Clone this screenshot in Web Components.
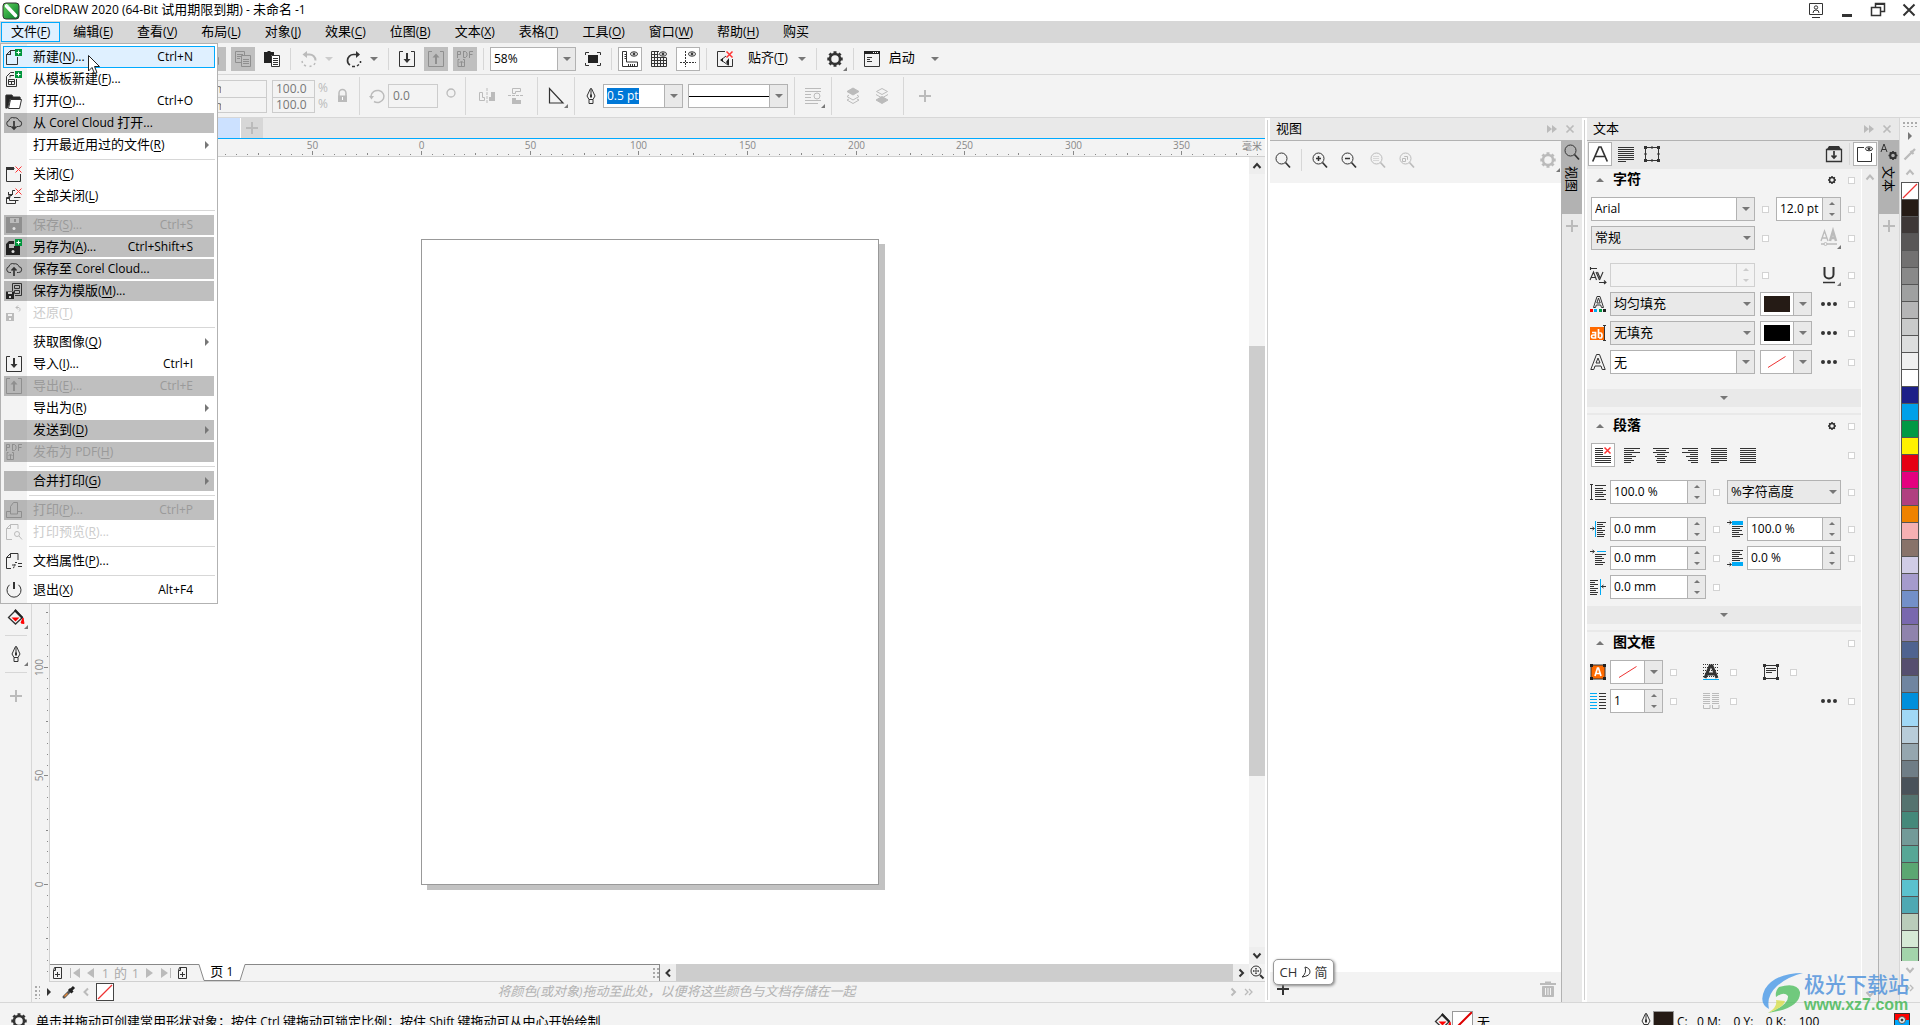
<!DOCTYPE html>
<html lang="zh-CN">
<head>
<meta charset="utf-8">
<title>CorelDRAW 2020</title>
<style>
html,body{margin:0;height:100%;overflow:hidden}
body{font:12px/16px "Open Sans","Noto Sans CJK SC",sans-serif;color:#000;background:#f3f3f3}
</style>
</head>
<body>
<corel-app></corel-app>
<script>
const ICONS = {
  logo:'<defs><linearGradient id="g" x1="0" y1="0" x2="1" y2="1"><stop offset="0" stop-color="#5fd35a"/><stop offset="1" stop-color="#057a2c"/></linearGradient></defs><rect width="16" height="16" rx="3" fill="url(#g)"/><path d="M3.5 3 12.500 12.500" stroke="#fff" stroke-width="3.600" stroke-linecap="round"/><path d="M3 2.500l3 1" stroke="#cfe" stroke-width="1"/>',
  doc:'<path d="M9.500 1.500H4.500L.5 5.500V15.500H11.500V8M.5 5.500H4.500V1.500"/><path d="M.5 5.500H4.500V1.500z" fill="#333" fill-opacity=".15"/>',
  plus:'<path d="M9 0h7v7H9z" fill="#00963c" stroke="none"/><path d="M12.500 1.500v4M10.500 3.500h4" stroke="#fff"/>',
  x:'<path d="M9.500.5l6 6M15.500.5l-6 6" stroke="#f33"/>',
  tmpl:'<path d="M8 1.500H4.500L.5 5.500V15.500H10.500V8M2.500 13.500v-5h6v5zM2.500 10.500h6M5.500 10.500v3M4 6.500V4.500h4"/>',
  open:'<path d="M0 15.500V2.500h5l1.500 2H14V6" fill="none"/><path d="M0 2h6l1 2h7v2H4L1.500 15H0z" fill="#222"/><path d="M4.500 6.500h11l-2 9h-11z" fill="#fff"/>',
  cdown:'<path d="M5 11.500H3.500A3 3 0 0 1 3 5.600 3.500 3.500 0 0 1 8 2.900a4 4 0 0 1 5 2.800 2.900 2.900 0 0 1-.5 5.800H11" /><path d="M8 6v8M5.500 11.500 8 14l2.500-2.500" stroke-width="1.700"/>',
  cup:'<path d="M5 11.500H3.500A3 3 0 0 1 3 5.600 3.500 3.500 0 0 1 8 2.900a4 4 0 0 1 5 2.800 2.900 2.900 0 0 1-.5 5.800H11" /><path d="M8 15V7M5.500 9.500 8 7l2.500 2.500" stroke-width="1.700"/>',
  close:'<path d="M8.500 2.500H.5V15.500H14.500V8"/><path d="M0 1h8v3H0z" fill="#333" stroke="none"/>',
  closeall:'<path d="M4 9.500v-2h2M2.500 7v-3h0M6.500 5.500v-3H9M.5 15.500v-6h3M.5 15.500h9V12M.5 10.500h2.500v-4h4M6.500 3v3.500M12.500 12.500H3.500v-4M14.500 9.500H8"/>',
  save:'<path d="M0 0h16v16H0z" fill="currentColor" stroke="none"/><path d="M4 1h9v5H4z" fill="#bbb" stroke="none"/><path d="M8 2h2v3H8z" fill="currentColor" stroke="none"/><circle cx="8" cy="11.500" r="1.500" fill="#ddd" stroke="none"/>',
  saveas:'<path d="M0 5l3-3h5v5h6v9H0z" fill="#222" stroke="none"/><path d="M3 5h5v4H3z" fill="#bbb" stroke="none"/><circle cx="7" cy="12.500" r="1.500" fill="#ddd" stroke="none"/>',
  savetmpl:'<path d="M6.500.5h9v12H9M8.500 2.500h5v3h-5zM8.500 7.500h5v3h-5zM6.500.5V8"/><path d="M0 8.500h8V16H0z" fill="#222" stroke="none"/><path d="M2 9h4v2H2zM3 13h2v2H3z" fill="#ccc" stroke="none"/>',
  revert:'<path d="M0 8h8v8H0z" fill="currentColor" stroke="none"/><path d="M2 9h4v2H2zM3 13h2v2H3z" fill="#f3f3f3" stroke="none"/><path d="M10 2.500h3a2.500 2.500 0 0 1 0 4M12 .5l-2 2 2 2" />',
  import:'<path d="M4 .5H.5v15h15V.5H12"/><path d="M8 2v8" stroke-width="2"/><path d="M4.500 8 8 12l3.500-4z" fill="currentColor" stroke="none"/>',
  export:'<path d="M4 .5H.5v15h15V.5H12"/><path d="M8 13V5" stroke-width="2"/><path d="M4.500 6.500 8 2.500l3.500 4z" fill="currentColor" stroke="none"/>',
  pdf:'<path d="M.5 7V.5h3v3H.5M6.500 0v6.500H8.500l1.500-1.500V2L8.500.5H6.500M12.500 7V.5h3.500M12.500 3.500h3M2.500 8.500H1v7h6.500v-7H6M4.500 15V11M2.500 12l2-2 2 2"/>',
  print:'<path d="M4 9.500H.5v6h15v-6H12M4.500 12V4.500l3-4h4V12z"/>',
  preview:'<path d="M6 15.500H.5v-11l4-4H12V5M.5 4.500h4v-4"/><circle cx="11" cy="10" r="2.500"/><path d="M13 12l3 3.500"/>',
  props:'<path d="M5 15.500H.5v-11l4-4H12V7M.5 4.500h4v-4M12 10.500h4M12 13.500h4M8 13.500l1-1V11M6 12h3M7 15l1.500-1M9 9.500h2"/>',
  power:'<path d="M8 0v7" stroke-width="2"/><path d="M3.500 2.800a7 7 0 1 0 9 0"/>',
  copy:'<path d="M.5.500h9v11h-9zM2 3.500h6M2 5.500h4M2 7.500h3"/><path d="M6.500 4.500h9v11h-9z" fill="#bfbfbf"/><path d="M8 8.500h6M8 10.500h6M8 12.500h6"/>',
  cut:'<path d="M2.500 6.500h10v7h-10z"/>',
  paste:'<path d="M0 1h3l1-1h2l1 1h3v3H7v8H0z" fill="#222" stroke="none"/><path d="M7.500 4.500h8v11h-8z" fill="#fff"/><path d="M9 7.500h5M9 9.500h5M9 11.500h5M9 13.500h5"/>',
  undo:'<path d="M4 3.500h4a6 6 0 0 1 6.500 6" stroke-width="2"/><path d="M14 12l-1 2M10.500 15l-2 .5M5 15l-2-1M1.500 12 1 10" stroke-width="1.500"/><path d="M6 0v7L1.500 3.500z" fill="currentColor" stroke="none"/>',
  redo:'<path d="M12 3.500H8a6 6 0 0 0-6.500 6q0 3 2.500 4.500" stroke-width="1.700"/><path d="M6 15.500h3M11 15l2-1.500M14.500 12v-2" stroke-width="1.500"/><path d="M10 0v7l4-3.500z" fill="currentColor" stroke="none"/>',
  full:'<path d="M3 4h10v8H3z" fill="#222" stroke="none"/><path d="M.5 4V1.500H4M12 1.500h3.500V4M15.500 12v2.500H12M4 14.500H.5V12"/>',
  rulers:'<path d="M.5.500h4v10.500h11v4.500H.5zM2.500 3.500h2M2.500 5.500h2M2.500 7.500h2M6.500 13v2M8.500 13v2M10.500 13v2M12.500 13v2"/><ellipse cx="12" cy="3" rx="3.500" ry="2.200"/><circle cx="12" cy="3" r="1" fill="#222"/>',
  grid:'<path d="M.5.500h7.500M.5.500v15h15V7M.5 3.500h7M.5 6.500h15M.5 9.500h15M.5 12.500h15M3.500 0v16M6.500 0v16M9.500 6v10M12.500 6v10"/><ellipse cx="12" cy="3" rx="3.500" ry="2.200"/><circle cx="12" cy="3" r="1" fill="#222"/>',
  guides:'<path d="M5.500 0v16M0 11.500h16" stroke-dasharray="2 1"/><ellipse cx="12" cy="3" rx="3.500" ry="2.200"/><circle cx="12" cy="3" r="1" fill="#222"/>',
  snapoff:'<path d="M8 .5H.5v15h15V8"/><path d="M9 5 4 9l7 5V9" fill="none"/><path d="M3 9l3-2v4zM9 11l3-4v8z" fill="#222" stroke="none"/><path d="M9.500.5l6 6M15.500.5l-6 6" stroke="#f33" stroke-width="1.500"/>',
  gear:'<circle cx="8" cy="8" r="5" stroke-width="2.500"/><path d="M8 .3v2.500M8 13.200v2.500M.3 8h2.500M13.200 8h2.500M2.500 2.500l1.800 1.800M11.700 11.700l1.800 1.800M13.500 2.500l-1.800 1.800M4.300 11.700l-1.800 1.800" stroke-width="3"/>',
  gearsm:'<circle cx="8" cy="8" r="2.500" stroke-width="1.500"/><path d="M8 4v1.500M8 10.500V12M4 8h1.500M10.500 8H12M5.200 5.200l1 1M9.800 9.800l1 1M10.800 5.200l-1 1M6.200 9.800l-1 1" stroke-width="1.500"/>',
  launch:'<path d="M.5.500h15v15H.5zM3 6.500h5M3 8.500h3M3 10.500h5"/><path d="M0 0h16v3H0z" fill="#222" stroke="none"/><path d="M9 1.500h6" stroke="#fff" stroke-dasharray="1 1"/>',
  lock:'<path d="M4 8V5a3 3 0 0 1 7 0v3" stroke-width="1.500"/><path d="M3 7.500h9V14H3z" fill="currentColor" stroke="none"/><path d="M7.500 9v3" stroke="#fff"/>',
  rot:'<path d="M2 8a6.500 6 0 1 1 3 5.500" stroke-width="1.500"/><path d="M0 8h5l-2.500 3.500z" fill="currentColor" stroke="none"/>',
  deg:'<circle cx="8" cy="5" r="4" stroke-width="1.300"/>',
  mh:'<path d="M.5 4.500h3v5h2v3h-5z"/><path d="M16 4h-4v5h-2v4h6z" fill="currentColor" stroke="none"/><path d="M8 0v16" stroke-dasharray="3 1"/>',
  mv:'<path d="M4.500.500h8v3h-5v2h-3z"/><path d="M4 16h9v-4H8v-2H4z" fill="currentColor" stroke="none"/><path d="M0 7.500h16" stroke-dasharray="3 1"/>',
  corner:'<path d="M1.500.500v14.500H15z" stroke-width="1.200"/>',
  pen:'<path d="M7.500.500 4 8l2 3.500h4L12 8 8.500.500zM6 11.500v4h4v-4M8 1v6"/><path d="M8 6.500v3" stroke-width="2"/>',
  wrap:'<path d="M0 .5h16M0 3.500h16M0 6.500h6M0 9.500h6M0 12.500h16M0 15.500h13"/><circle cx="12" cy="8" r="3" fill="#f3f3f3"/>',
  front:'<path d="M8 0l6 3.500-6 3.500-6-3.500z" fill="currentColor"/><path d="M4 7l-2 1.500 6 3.500 6-3.500L12 7M4 11l-2 1 6 3.500 6-3.500-2-1"/>',
  back:'<path d="M8 8.500l6 3.500-6 3.500-6-3.500z" fill="currentColor"/><path d="M8 .5l5.500 3-5.500 3-5.500-3zM2 6.500l6 3.500 6-3.500"/>',
  add:'<path d="M8 2v12M2 8h12" stroke-width="2"/>',
  bucket:'<path d="M7.500 1.500l-7 7 7 6.500 7-6.500z" stroke-width="1.300"/><path d="M7.500 0 15 8l-1.500 1.500L6 2z" fill="#222" stroke="none"/><path d="M3.500 8.500h8l-4 4z" fill="red" stroke="none"/><path d="M13 14l2-5 1 5.500z" fill="red" stroke="red"/>',
  mag:'<circle cx="6.500" cy="6.500" r="5.500"/><path d="M10.500 10.500l4.500 5" stroke-width="1.700"/>',
  magp:'<circle cx="6.500" cy="6.500" r="5.500"/><path d="M10.500 10.500l4.500 5" stroke-width="1.700"/><path d="M6.500 4v5M4 6.500h5" stroke-width="1.500"/>',
  magm:'<circle cx="6.500" cy="6.500" r="5.500"/><path d="M10.500 10.500l4.500 5" stroke-width="1.700"/><path d="M4 6.500h5" stroke-width="1.500"/>',
  magd:'<circle cx="6.500" cy="6.500" r="5.500"/><path d="M10.500 10.500l4.500 5" stroke-width="1.700"/><path d="M3.500 4.500h6M3.500 6.500h6M3.500 8.500h6" stroke-dasharray="1 1"/>',
  magr:'<circle cx="6.500" cy="6.500" r="5.500"/><path d="M10.500 10.500l4.500 5" stroke-width="1.700"/><path d="M3.500 6.500h3v3h-3zM5.500 5V4.500h3v3H8"/>',
  trash:'<path d="M5 1.500h6M0 3h16" stroke-width="2"/><path d="M2.500 5.500h11v10h-11z" fill="currentColor"/><path d="M5.500 7v7M8 7v7M10.500 7v7" stroke="#f3f3f3"/>',
  bigA:'<path d="M.7 15.500 7 1h2l6.300 14.500M3 10.500h10" stroke-width="1.700"/>',
  lines:'<path d="M0 1.500h16M0 3.500h16M0 5.500h16M0 7.500h16M0 9.500h16M0 11.500h16M0 13.500h16M0 15.500h8"/>',
  frame:'<path d="M1.500 1.500h13v13h-13z"/><path d="M0 0h3v3H0zM13 0h3v3h-3zM0 13h3v3H0zM13 13h3v3h-3z" fill="#333" stroke="none"/><path d="M7 1.500h2M7 14.500h2M1.500 7v2M14.500 7v2" stroke-width="2"/>',
  dock:'<path d="M.5 3.500h15v12H.5z" stroke-width="1.300"/><path d="M1 3 3 0h10l2 3z" fill="#333" stroke="none"/><path d="M8 5v7M5.500 9.500 8 12l2.500-2.500" stroke-width="1.700"/>',
  eyepage:'<path d="M7 1.500H.5v14h14V7"/><ellipse cx="12" cy="2.800" rx="3.500" ry="2"/><circle cx="12" cy="2.800" r="1" fill="#222"/>',
  AA:'<path d="M0 11 3.500 1 7 11M1.500 8h4" stroke-width="1.300"/><path d="M9 11l3-10 3 10M10 8h4" stroke-width="2.500"/><path d="M0 14h16" stroke-width="1.500"/><circle cx="4.500" cy="14" r="1.500" fill="#f3f3f3"/>',
  AV:'<path d="M0 13 3.500 5l3 8M1.500 10.500h4M6 5l3.500 8M9.500 13 13 5M7.500 5l3 7M.5 0v3M.5 1.500H7M9 15.500h7M14 13.500l2 2-2 1.500" stroke-width="1.100"/>',
  U:'<path d="M3.500 0v7.500a4.500 4 0 0 0 9 0V0" stroke-width="2"/><path d="M2 15.500h12" stroke-width="1.500"/>',
  Afill:'<path d="M3.500 11.500 7 .5h3l3.500 11h-2L10.700 9H6.300l-.8 2.500zM6.800 7h3.400L8.500 2z"/><path d="M0 13h3v3H0z" fill="red" stroke="none"/><path d="M4 13h3v3H4z" fill="#00aaf5" stroke="none"/><path d="M9 13h3v3H9z" fill="#009944" stroke="none"/><path d="M13 13h3v3h-3z" fill="#222" stroke="none"/>',
  ab:'<path d="M0 2h14v13H0z" fill="#ff6a00" stroke="none"/><path d="M2 7.500h3.500V13H3a1.500 1.500 0 0 1 0-3h2M8.500 4v9M9 8h1.500q1.500 0 1.500 2.500T10.500 13H9" stroke="#fff" stroke-width="1.700"/><path d="M14.500 1v14M13 .5h3M13 15.500h3"/>',
  Aout:'<path d="M.8 15.500 6.500.5h3l5.700 15h-3L11 12H5l-1.200 3.500zM6 9h4L8 4z"/>',
  dots:'<path d="M2 8h0M8 8h0M14 8h0" stroke-width="4" stroke-linecap="round"/>',
  alNone:'<path d="M0 1.500h8M0 3.500h8M0 5.500h8M0 7.500h8M0 9.500h16M0 11.500h16M0 13.500h16M0 15.500h16"/><path d="M9.500.5l6 6M15.500.5l-6 6" stroke="#f33" stroke-width="1.500"/>',
  alL:'<path d="M0 1.500h16M0 3.500h10M0 5.500h16M0 7.500h8M0 9.500h12M0 11.500h8M0 13.500h10M0 15.500h7"/>',
  alC:'<path d="M0 1.500h16M3 3.500h10M0 5.500h16M4 7.500h8M2 9.500h12M4 11.500h8M3 13.500h10M4 15.500h8"/>',
  alR:'<path d="M0 1.500h16M6 3.500h10M0 5.500h16M8 7.500h8M4 9.500h12M8 11.500h8M6 13.500h10M9 15.500h7"/>',
  alF:'<path d="M0 1.500h16M0 3.500h16M0 5.500h16M0 7.500h16M0 9.500h16M0 11.500h16M0 13.500h16M0 15.500h16"/>',
  lsp:'<path d="M1.500 1v14M0 .5h3M0 15.500h3M5 1.500h11M5 4.500h8M5 6.500h11M5 8.500h8M5 10.500h11M5 12.500h9M5 15.500h11"/>',
  indL:'<path d="M7 1.500h9M7 3.500h6M7 5.500h8M7 7.500h5M7 9.500h8M7 11.500h6M7 13.500h8M7 15.500h7M0 7.500h4M2.500 6l2 1.500-2 1.500"/><path d="M5.500 0v16" stroke="#00aaf5"/>',
  indF:'<path d="M5 4.500h11M5 6.500h7M5 8.500h9M5 10.500h7M5 12.500h10M5 14.500h8M0 1.500h4M2.500 0l2 1.500-2 1.500"/><path d="M7 1.500h9" stroke="#00aaf5"/>',
  indR:'<path d="M0 1.500h8M0 3.500h5M0 5.500h8M0 7.500h4M0 9.500h8M0 11.500h6M0 13.500h8M0 15.500h7M11 7.500h5M13.500 6l-2 1.500 2 1.500"/><path d="M10.500 0v16" stroke="#00aaf5"/>',
  spB:'<path d="M5 0h11v4H5z" fill="#00aaf5" stroke="none"/><path d="M5 5.500h11M5 7.500h8M5 9.500h10M5 11.500h7M5 13.500h11M5 15.500h8M0 1.500h4M2.500 0l2 1.500-2 1.500"/>',
  spA:'<path d="M5 12h11v4H5z" fill="#00aaf5" stroke="none"/><path d="M5 .5h11M5 2.500h8M5 4.500h10M5 6.500h7M5 8.500h11M5 10.500h8M0 14.500h4M2.500 13l2 1.500-2 1.500"/>',
  frA:'<path d="M1 1h14v14H1z" fill="#ff6a00"/><path d="M5 12 7.500 4h1L11 12M6 9.500h4" stroke="#fff" stroke-width="1.700"/><path d="M0 0h3v3H0zM13 0h3v3h-3zM0 13h3v3H0zM13 13h3v3h-3z" fill="#222" stroke="none"/>',
  baseA:'<path d="M0 .5h16M0 3.500h16M0 6.500h16M0 9.500h16M0 12.500h16" stroke-dasharray="1 1"/><path d="M2 14 7 2h2l5 12M4.500 10h7" stroke-width="3"/><path d="M0 15.500h16" stroke="#00aaf5"/>',
  frTxt:'<path d="M1.500 1.500h13v13h-13zM3 4.500h10M3 6.500h10M3 8.500h6"/><path d="M0 0h3v3H0zM13 0h3v3h-3zM0 13h3v3H0zM13 13h3v3h-3z" fill="#333" stroke="none"/>',
  cols:'<path d="M9 .5h7M9 3.500h7M9 6.500h7M9 9.500h7M9 12.500h7M9 15.500h7"/><path d="M0 .5h7M0 3.500h7M0 6.500h7M0 9.500h7M0 12.500h7M0 15.500h7" stroke="#00aaf5"/>',
  cols2:'<path d="M0 .5h7M0 2.500h7M0 4.500h7M0 6.500h7M0 8.500h7M0 10.500h7M.5 12v3.500H7V12M9 .5h7M9 2.500h7M9 4.500h7M9 6.500h7M9 8.500h7M9 10.500h7M9.500 12v3.500H16V12"/>',
  dropper:'<path d="M3 13l5.500-5.500" stroke="#555" stroke-width="3" stroke-linecap="round"/><path d="M3.500 12.500l3-3" stroke="#e98b3a" stroke-width="1.500"/><path d="M8 5l3.500 3.500M10.500 5.500 13 3" stroke="#222" stroke-width="3"/>',
  dropperg:'<path d="M2.500 13.500l6.500-6.500M8.500 5l3 3M10.500 5.500 13 3" stroke-width="2.300"/>',
  pageadd:'<path d="M4.500 2.500h7v11h-8v-8zM3.500 5.500h2v-3"/><path d="M7.500 7v5M5 9.500h5"/>',
  magfit:'<circle cx="7" cy="7" r="5"/><path d="M11 11l3.500 3.500" stroke-width="2"/><path d="M7 4v6M4 7h6" stroke-width="1.500" stroke-dasharray="1.500 .7"/>',
  up:'<path d="M4.500 10.500 8 6.500l3.500 4" stroke-width="2"/>', down:'<path d="M4.500 6 8 10l3.500-4" stroke-width="2"/>',
  left:'<path d="M10 4.500 6.500 8l3.500 3.500" stroke-width="2"/>', right:'<path d="M6.500 4.500 10 8l-3.500 3.500" stroke-width="2"/>',
  dbl:'<path d="M4 5l3 3-3 3M8 5l3 3-3 3" stroke-width="1.300"/>',
  ff:'<path d="M3 4l5 4-5 4zM8 4l5 4-5 4z" fill="currentColor" stroke="none"/>',
  xx:'<path d="M4.500 4.500l7 7M11.500 4.500l-7 7" stroke-width="1.700"/>',
  tri:'<path d="M4 6h8l-4 4z" fill="currentColor" stroke="none"/>',
  triu:'<path d="M4 10h8L8 6z" fill="currentColor" stroke="none"/>',
  trir:'<path d="M6 4v8l4-4z" fill="currentColor" stroke="none"/>',
  first:'<path d="M3.500 3v10" /><path d="M13 3v10L6 8z" fill="currentColor" stroke="none"/>',
  last:'<path d="M12.500 3v10" /><path d="M3 3v10l7-5z" fill="currentColor" stroke="none"/>',
  prev:'<path d="M11 3v10L4 8z" fill="currentColor" stroke="none"/>', next:'<path d="M4 3v10l7-5z" fill="currentColor" stroke="none"/>',
  textset:'<path d="M0 8 3 0l3 8M1 5.500h4"/><circle cx="12" cy="11.500" r="2.800" stroke-width="2"/><path d="M12 7v2M12 14v2M7.500 11.500h2M14.500 11.500h2M8.800 8.300l1.400 1.400M13.800 13.300l1.400 1.400M15.200 8.300l-1.400 1.400M10.200 13.300l-1.400 1.400" stroke-width="1.700"/>',
  none:'<path d="M1 15 15 1" stroke="#e33" stroke-width="1.200"/>',
  user:'<path d="M1.500 1.500h13v11h-13zM4 15.500h8" /><circle cx="8" cy="5.500" r="1.700"/><path d="M5 11q0-3 3-3t3 3"/>',
  min:'<path d="M3 13.500h10" stroke-width="3"/>',
  rest:'<path d="M1.500 5.500h9v8h-9zM5.500 5V1.500h9v8H11" stroke-width="1.500"/><path d="M5 2h10" stroke-width="2"/>',
  exit:'<path d="M2.500 2.500l11 11M13.500 2.500l-11 11" stroke-width="2"/>',
  profile:'<path d="M0 0h16v7H0z" fill="red" stroke="none"/><path d="M0 7h16v9H0z" fill="#00a8ff" stroke="none"/><circle cx="8" cy="7" r="3.500" fill="#eee" stroke="#555"/><circle cx="8" cy="7" r="1" fill="#222"/><path d="M.5.500h15v15H.5z"/>'
};
/* splits a label into Han runs and Latin runs; "_x" marks a mnemonic letter */
const lab = s => s.replace(/_(.)/g,'<u>$1</u>').replace(/[\u3000-\u9fff\uff00-\uffef]+/g,m=>`<span class="han">${m}</span>`);
const BASE = `*{box-sizing:border-box}:host{display:block}
button,input,select{font:inherit;color:inherit;margin:0;padding:0;border:0;background:none;border-radius:0;outline:0}
.han{font-size:13px}u{text-underline-offset:2px}`;
const def = (name, html, init) => {
  const tpl = document.createElement('template');
  customElements.define(name, class extends HTMLElement {
    constructor(){ super(); this.attachShadow({mode:'open'}); }
    connectedCallback(){
      if (this.ready) return; this.ready = true;
      tpl.innerHTML = typeof html === 'function' ? html(this) : html;
      this.shadowRoot.innerHTML = '<style>' + BASE + '</style>';
      this.shadowRoot.append(tpl.content.cloneNode(true));
      if (init) init(this, this.shadowRoot);
    }
  });
};
const at = (e,n,d='') => e.getAttribute(n) ?? d;

def('x-icon', e => `<style>:host{display:block;flex:none;width:16px;height:16px;color:#333}:host([dim]){color:#bbb}:host([sel]){color:#8f8f8f}svg{display:block;width:100%;height:100%;overflow:visible}</style><svg viewBox="0 0 16 16" fill="none" stroke="currentColor" aria-hidden="true">${at(e,'name').split(' ').map(n=>ICONS[n]||'').join('')}</svg>`);

def('tool-btn', e => `<style>:host{flex:none}button{display:flex;align-items:center;justify-content:center;width:24px;height:24px;position:relative}
:host([off]) button{background:#bfbfbf}:host([on]) button{background:#fff;border:1px solid #b2b2b2}
.f{position:absolute;right:0;bottom:0;border:solid transparent;border-width:0 0 4px 4px;border-bottom-color:#777}</style>
<button aria-label="${at(e,'label')}"><x-icon name="${at(e,'icon')}" ${e.hasAttribute('off')?'sel':e.hasAttribute('dim')?'dim':''}></x-icon>${e.hasAttribute('fly')?'<span class="f"></span>':''}</button>`);

def('dd-btn', e => `<style>:host{flex:none}button{display:flex;width:16px;height:24px;align-items:center;justify-content:center}</style>
<button aria-label="${at(e,'label')}"><x-icon name="tri" style="color:${e.hasAttribute('dim')?'#ccc':'#777'}"></x-icon></button>`);

def('tool-sep', `<style>:host{flex:none;width:3px;padding:0 1px;height:var(--sep,22px)}i{display:block;height:100%;background:#d7d7d7}</style><i></i>`);

def('combo-box', e => `<style>:host{flex:none;height:24px;width:var(--w)}div{display:flex;height:100%;border:1px solid #b2b2b2;background:#fff}
input{flex:1;min-width:0;padding:0 0 1px 3px}input::selection{background:#0078d7;color:#fff}button{width:18px;flex:none;border-left:1px solid #b2b2b2;background:#e9e9e9;display:flex;align-items:center;justify-content:center}x-icon{color:#777}
.line{flex:1;display:flex;align-items:center}.line i{height:1px;background:#000;width:100%}</style>
<div>${e.hasAttribute('line')?'<span class="line"><i></i></span>':`<input class="${e.hasAttribute('han')?'han':''}" aria-label="${at(e,'label')}" value="${at(e,'value')}">`}<button aria-label="打开列表"><x-icon name="tri"></x-icon></button></div>`,
 (e,r)=>{ if(e.hasAttribute('selected')){const i=r.querySelector('input');i.focus();i.select();} });

def('drop-select', e => `<style>:host{flex:none;height:24px;width:var(--w);position:relative}select{appearance:none;width:100%;height:100%;border:1px solid #b2b2b2;background:#e9e9e9;font-size:13px;padding:0 18px 2px 3px}
x-icon{position:absolute;right:0;top:4px;color:#777;pointer-events:none}</style>
<select aria-label="${at(e,'label')}"><option>${at(e,'value')}</option></select><x-icon name="tri"></x-icon>`);

def('spin-box', e => `<style>:host{flex:none;height:24px;width:var(--w)}div{display:flex;height:100%;border:1px solid #b2b2b2;background:#fff}
input{flex:1;min-width:0;padding:0 0 1px 3px}span{width:18px;flex:none;border-left:1px solid #b2b2b2;background:#e9e9e9;display:flex;flex-direction:column;color:#777}
button{flex:1;display:flex;align-items:center;justify-content:center}i{border:3px solid transparent;border-top:0;border-bottom-color:currentColor}button+button i{border-top:3px solid;border-bottom:0}
:host([dim]) div{background:#f3f3f3;border-color:#d0d0d0}:host([dim]) span{background:#f3f3f3;border-color:#d0d0d0;color:#ccc}</style>
<div><input aria-label="${at(e,'label')}" value="${at(e,'value')}"><span><button aria-label="增加"><i></i></button><button aria-label="减少"><i></i></button></span></div>`);

def('color-pick', e => `<style>:host{flex:none;height:24px;width:var(--w)}button{display:flex;width:100%;height:100%;border:1px solid #b2b2b2;background:#fff}
b{flex:1;align-self:center;display:flex;align-items:center;justify-content:center}b i{width:26px;height:16px;background:${at(e,'color')}}span{width:18px;flex:none;height:100%;border-left:1px solid #b2b2b2;background:#e9e9e9;display:flex;align-items:center;justify-content:center}span x-icon{color:#777}</style>
<button aria-label="${at(e,'label')}"><b>${e.hasAttribute('color')?'<i></i>':'<svg width="20" height="12"><path d="M1 11.500 18.500.5" stroke="#e33"/></svg>'}</b><span><x-icon name="tri"></x-icon></span></button>`);

def('style-box', `<style>:host{flex:none;width:7px;height:7px}input{display:block;appearance:none;width:7px;height:7px;border:1px solid #d3d3d3;background:#fff}</style><input type="checkbox" aria-label="样式">`);

/* ---- title and menu bars ---- */
def('title-bar', `<style>:host{flex:none;height:21px;background:#fff}div{display:flex;align-items:center;height:100%;padding:0 3px;gap:5px}h1{flex:1;margin:0;font-size:12px;font-weight:400;line-height:16px;padding-bottom:2px}nav{display:flex;gap:15px;padding-bottom:2px}button{width:16px;height:16px}</style>
<div><x-icon name="logo"></x-icon><h1>${lab('CorelDRAW 2020 (64-Bit 试用期限到期) - 未命名 -1')}</h1>
<nav>${[['user','用户'],['min','最小化'],['rest','还原'],['exit','关闭']].map(a=>`<button aria-label="${a[1]}"><x-icon name="${a[0]}"></x-icon></button>`).join('')}</nav></div>`);

def('menu-bar', `<style>:host{flex:none;height:22px;background:#d7d7d7}nav{display:flex;padding:1px;gap:2px}button{height:20px;padding:0 10px 2px;line-height:16px;border:1px solid transparent;flex:none}button:first-child{background:#dff0ff;border-color:#0af;padding:0 9px 2px}</style>
<nav>${['文件(_F)','编辑(_E)','查看(_V)','布局(_L)','对象(_J)','效果(_C)','位图(_B)','文本(_X)','表格(_T)','工具(_O)','窗口(_W)','帮助(_H)','购买'].map(m=>`<button>${lab(m)}</button>`).join('')}</nav>`);

def('menu-item', e => `<style>:host{height:22px;padding:1px}button{width:100%;height:20px;display:flex;align-items:center;text-align:left}
.ic{width:23px;padding-left:2px;flex:none}.t{flex:1;padding:0 0 1px 6px;line-height:18px;white-space:nowrap}.k{padding:0 21px 0 0;line-height:18px}.a{margin-right:-1px}.a x-icon{color:#777}
:host([off]) button{background:rgba(0,0,0,.25)}:host([dim]) button{color:#ccc}:host([off][dim]) button{color:#9a9a9a}
:host([hot]){padding:0}:host([hot]) button{height:22px;background:#dff0ff;border:1px solid #0af}</style>
<button role="menuitem"><span class="ic">${at(e,'icon')?`<x-icon name="${at(e,'icon')}" ${e.hasAttribute('off')&&e.hasAttribute('dim')?'sel':e.hasAttribute('dim')?'dim':''}></x-icon>`:''}</span><span class="t">${lab(at(e,'text'))}</span>${at(e,'key')?`<span class="k">${at(e,'key')}</span>`:''}${e.hasAttribute('sub')?'<span class="a"><x-icon name="trir"></x-icon></span>':''}</button>`);

const I=(icon,text,key='',f='')=>`<menu-item icon="${icon}" text="${text}" key="${key}" ${f}></menu-item>`, S='<hr>';
def('file-menu', `<style>:host{position:absolute;left:0;top:43px;width:218px;border:1px solid #b2b2b2;padding:2px;background:linear-gradient(90deg,#f3f3f3 26px,#fff 26px);z-index:5}
hr{border:0;margin:3px 0 3px 26px;height:1px;background:#d7d7d7}</style>`+
 I('doc plus','新建(_N)...','Ctrl+N','hot')+I('tmpl plus','从模板新建(_F)...')+I('open','打开(_O)...','Ctrl+O')+I('cdown','从 Corel Cloud 打开...','','off')+I('','打开最近用过的文件(_R)','','sub')+S+
 I('close x','关闭(_C)')+I('closeall x','全部关闭(_L)')+S+
 I('save','保存(_S)...','Ctrl+S','off dim')+I('saveas plus','另存为(_A)...','Ctrl+Shift+S','off')+I('cup','保存至 Corel Cloud...','','off')+I('savetmpl','保存为模版(_M)...','','off')+I('revert','还原(_T)','','dim')+S+
 I('','获取图像(_Q)','','sub')+I('import','导入(_I)...','Ctrl+I')+I('export','导出(_E)...','Ctrl+E','off dim')+I('','导出为(_R)','','sub')+I('','发送到(_D)','','off sub')+I('pdf','发布为 PDF(_H)','','off dim')+S+
 I('','合并打印(_G)','','off sub')+S+I('print','打印(_P)...','Ctrl+P','off dim')+I('preview','打印预览(_R)...','','dim')+S+I('props','文档属性(_P)...')+S+I('power','退出(_X)','Alt+F4'));

/* ---- toolbars ---- */
def('std-toolbar', `<style>:host{flex:none;height:32px;border-bottom:1px solid #d7d7d7}div{display:flex;align-items:center;gap:5px;padding:4px 0 0 202px}span{display:flex;align-items:center}button{flex:none;display:block;height:24px;line-height:20px;padding-bottom:3px;white-space:nowrap}button .han{display:inline}.b{padding-left:6px}.c{padding-right:12px}.l{padding-left:6px}</style>
<div><tool-btn icon="cut" off label="剪切"></tool-btn><tool-btn icon="copy" off label="复制"></tool-btn><tool-btn icon="paste" label="粘贴"></tool-btn><tool-sep></tool-sep>
<span><tool-btn icon="undo" dim label="撤销"></tool-btn><dd-btn dim label="撤销列表"></dd-btn></span><span><tool-btn icon="redo" label="重做"></tool-btn><dd-btn label="重做列表"></dd-btn></span><tool-sep></tool-sep>
<tool-btn icon="import" label="导入"></tool-btn><tool-btn icon="export" off label="导出"></tool-btn><tool-btn icon="pdf" off label="发布为 PDF"></tool-btn><tool-sep></tool-sep>
<combo-box style="--w:86px" label="缩放级别" value="58%"></combo-box><tool-btn icon="full" label="全屏预览"></tool-btn><tool-sep></tool-sep>
<tool-btn icon="rulers" on label="显示标尺"></tool-btn><tool-btn icon="grid" label="显示网格"></tool-btn><tool-btn icon="guides" on label="显示辅助线"></tool-btn><tool-sep></tool-sep>
<tool-btn icon="snapoff" label="关闭贴齐"></tool-btn><span><button class="b">${lab('贴齐(_T)')}</button><dd-btn label="贴齐列表" class="l"></dd-btn></span><tool-sep></tool-sep><tool-btn icon="gear" fly label="选项"></tool-btn><tool-sep></tool-sep>
<tool-btn icon="launch" label="应用程序启动器"></tool-btn><span><button class="c">${lab('启动')}</button><dd-btn label="启动列表"></dd-btn></span></div>`);

def('prop-bar', `<style>:host{flex:none;height:43px;border-bottom:1px solid #d7d7d7;--sep:38px}.r{display:flex;align-items:center;padding-left:180px;height:42px}
.two{width:43px;height:33px;border:1px solid #ccc;color:#777;flex:none;display:flex;flex-direction:column}.two input{height:16px;line-height:14px;width:100%;padding:0 0 1px 3px}.two input+input{border-top:1px solid #ccc}.mm{width:87px}.mm input{padding:0 45px 0 0;text-align:right}
.pc{display:flex;flex-direction:column;color:#bbb;width:10px}.rt{width:50px;height:24px;border:1px solid #ccc;color:#777;padding:0 0 1px 4px;flex:none}.a{margin-left:3px}.b{margin-left:5px}.c{margin-left:8px}</style>
<div class="r"><div class="two mm"><input aria-label="宽度" value="210.0 mm"><input aria-label="高度" value="297.0 mm"></div>
<div class="two b"><input aria-label="水平缩放" value="100.0"><input aria-label="垂直缩放" value="100.0"></div><div class="pc a"><span>%</span><span>%</span></div>
<tool-btn icon="lock" dim label="锁定比率" class="a"></tool-btn><tool-sep class="a"></tool-sep><x-icon name="rot" dim class="c"></x-icon><input class="rt a" aria-label="旋转角度" value="0.0"><x-icon name="deg" dim class="b"></x-icon><tool-sep class="b"></tool-sep>
<tool-btn icon="mh" dim label="水平镜像" class="c"></tool-btn><tool-btn icon="mv" dim label="垂直镜像" class="b"></tool-btn><tool-sep class="c"></tool-sep><tool-btn icon="corner" fly label="角" class="b"></tool-btn><tool-sep class="b"></tool-sep>
<tool-btn icon="pen" label="轮廓宽度" class="a"></tool-btn><combo-box style="--w:80px" label="轮廓宽度" value="0.5 pt" selected></combo-box><combo-box style="--w:100px" line class="b"></combo-box><tool-sep class="b"></tool-sep>
<tool-btn icon="wrap" dim fly label="文本换行" class="b"></tool-btn><tool-sep class="b"></tool-sep><tool-btn icon="front" dim label="到图层前面" class="c"></tool-btn><tool-btn icon="back" dim label="到图层后面" class="b"></tool-btn><tool-sep class="c"></tool-sep><tool-btn icon="add" dim label="自定义" class="c"></tool-btn></div>`);

/* ---- workspace ---- */
def('tool-box', `<style>:host{width:32px;flex:none;border-right:1px solid #d7d7d7}div{display:flex;flex-direction:column;align-items:center;gap:6px;padding:7px 0 0 1px}hr{width:22px;height:1px;border:0;margin:0;background:#d7d7d7}.n{margin-top:5px}</style>
<div>${'选择 形状 裁剪 缩放 手绘 艺术笔 矩形 椭圆 多边形 文本 标注 连接器 阴影 透明度 滴管 网状'.split(' ').map(n=>`<tool-btn icon="frame" label="${n}"></tool-btn>`).join('')}
<tool-btn icon="bucket" fly label="交互式填充"></tool-btn><hr><tool-btn icon="pen" fly label="轮廓笔"></tool-btn><hr><tool-btn icon="add" dim label="自定义" class="n"></tool-btn></div>`);

const PX = 2.1727;
def('doc-ruler', e => {
  const v = e.hasAttribute('vertical');
  return `<style>:host{display:block;overflow:hidden;background:#f3f3f3;position:relative;${v?'width:18px;border-right':'height:18px;border-bottom'}:1px solid #d0d0d0;flex:none}svg{display:block;position:absolute;left:0;top:0;width:100%;height:100%}text{font:10px "Open Sans",sans-serif;fill:#888;text-anchor:middle}span{position:absolute;right:3px;top:1px;color:#888;font-size:10px;line-height:12px}</style><svg></svg>${v?'':'<span>毫米</span>'}`;
}, (e,r) => {
  const v = e.hasAttribute('vertical'), o = +at(e,'origin'), svg = r.querySelector('svg');
  new ResizeObserver(() => {
    const len = v ? e.clientHeight : e.clientWidth; let s='', t='';
    for (let mm=-1000; mm<=2000; mm+=5){
      const p = Math.round(o + (v?-1:1)*mm*PX)+.5, big = mm%50===0, a = big?12:mm%25===0?14:15;
      if (p < 0 || p > len) continue;
      s += v?`M${a} ${p}H16`:`M${p} ${a}V16`;
      if (big && p > 12 && p < len-12) t += v?`<text transform="translate(11 ${p}) rotate(-90)">${Math.abs(mm)}</text>`:`<text x="${p}" y="10">${Math.abs(mm)}</text>`;
    }
    svg.innerHTML = `<path d="${s}" stroke="#888"/>${t}`;
  }).observe(e);
});

def('page-nav', `<style>:host{height:18px;flex:none;border-bottom:1px solid #d0d0d0}div{display:flex;height:17px}.n{flex:1 1 609px;display:flex;align-items:center;border-top:1px solid #888;border-right:1px solid #888;color:#aaa;padding-left:1px;gap:4px;background:#f3f3f3}.n button{display:block;height:16px;flex:none}.n .i{width:14px}.n .j{width:12px}.i x-icon{margin-left:-1px}.j x-icon{margin-left:-2px}.q{margin:0 1px;line-height:15px}
.n .tab{width:50px;height:17px;margin-top:-1px;margin-left:3px;position:relative;color:#000}.tab svg{position:absolute;left:0;top:0}.tab b{font-weight:400;position:relative;display:block;text-align:center;line-height:14px;padding-bottom:2px;white-space:nowrap}
.g{margin-left:auto;width:7px;height:12px;background:radial-gradient(#aaa 1px,transparent 1px) 0 0/4px 4px}.s{flex:1 1 589px;display:flex;align-items:center;background:#eee}.s i{flex:1;height:100%;background:#cdcdcd}</style>
<div><div class="n"><button class="i" aria-label="添加页"><x-icon name="pageadd"></x-icon></button><button class="j" aria-label="首页"><x-icon name="first" dim></x-icon></button><button class="j" aria-label="前一页"><x-icon name="prev" dim></x-icon></button><span class="q">1</span><span class="han">的</span><span class="q">1</span><button class="j" aria-label="后一页"><x-icon name="next" dim></x-icon></button><button class="j" aria-label="末页"><x-icon name="last" dim></x-icon></button><button class="i" aria-label="添加页"><x-icon name="pageadd"></x-icon></button>
<button class="tab"><svg width="50" height="17"><path d="M0 .5H2L7 16.500H43L48 .5H50V0H0z" fill="#fff" stroke="#888"/><path d="M2.500 0H47.500" stroke="#fff" stroke-width="2"/></svg><b>${lab('页 1')}</b></button><span class="g"></span></div>
<div class="s"><x-icon name="left"></x-icon><i></i><x-icon name="right"></x-icon></div><x-icon name="magfit"></x-icon></div>`);

def('work-area', `<style>:host{flex:1;min-width:0;display:flex}.c{flex:1;min-width:0;display:flex;flex-direction:column}.tabs{height:21px;background:#e9e9e9;border-bottom:1px solid #0af;display:flex;flex:none}
.t{width:209px;background:#cce1ff;border-right:1px solid #fff}.p{width:22px;background:#d7d7d7;display:flex;align-items:center;justify-content:center}.m{flex:1;display:flex;min-height:0}.d{flex:1;min-width:0;display:flex;flex-direction:column}
.e{flex:1;display:flex;min-height:0}.cv{flex:1;background:#fff;position:relative;overflow:hidden}.page{position:absolute;left:371px;top:82px;width:458px;height:646px;border:1px solid #999;background:#fff;box-shadow:6px 5px 0 #c2c2c2}
.v{width:16px;display:flex;flex-direction:column;flex:none}.v x-icon{height:17px;background:#eee}.v span{flex:1;display:flex;flex-direction:column}.v b{flex:172}.v i{flex:430;background:#cdcdcd}.v em{flex:171}
.pal{height:20px;display:flex;align-items:center;flex:none;padding:0 8px 0 2px}.h{width:6px;height:14px;background:radial-gradient(#aaa 1px,transparent 1px) 0 0/4px 4px}.sw{width:18px;height:18px;border:1px solid #444;background:#fff;margin-left:2px}.pal p{flex:1;margin:0;text-align:center;font-style:italic;color:#b2b2b2;padding:0 0 2px 14px;white-space:nowrap}.o{margin-left:1px}.k{margin:0 1px 0 4px}</style>
<tool-box></tool-box><div class="c"><div class="tabs"><div class="t"></div><button class="p" aria-label="新建文档"><x-icon name="add" dim></x-icon></button></div>
<doc-ruler origin="389"></doc-ruler><div class="m"><doc-ruler vertical origin="727"></doc-ruler><div class="d"><div class="e"><div class="cv"><div class="page"></div></div><div class="v"><x-icon name="up"></x-icon><span><b></b><i></i><em></em></span><x-icon name="down"></x-icon></div></div><page-nav></page-nav></div></div>
<div class="pal"><span class="h"></span><x-icon name="trir" class="o"></x-icon><x-icon name="dropper" class="k"></x-icon><x-icon name="left" dim></x-icon><button class="sw" aria-label="无填充"><x-icon name="none"></x-icon></button><p>${lab('将颜色(或对象)拖动至此处，以便将这些颜色与文档存储在一起')}</p><x-icon name="right" dim></x-icon><x-icon name="dbl" dim></x-icon></div></div>`);

/* ---- dockers ---- */
def('docker-panel', e => `<style>:host{flex:none;display:flex;width:317px;border-left:2px solid #fff;background:#fff}.w{flex:1;margin-left:2px;display:flex;flex-direction:column;min-width:0}.l{width:1px;background:#d0d0d0;margin:2px 0}
header{height:23px;background:#e9e9e9;border-bottom:1px solid #b2b2b2;display:flex;align-items:center;padding:0 4px 0 6px;flex:none}h2{flex:1;font:13px/18px "Open Sans","Noto Sans CJK SC",sans-serif;margin:0;padding-bottom:3px}header x-icon{margin-left:2px}.b{flex:1;display:flex;min-height:0}.x{flex:1;min-width:0;display:flex;flex-direction:column}
.s{width:21px;background:#e9e9e9;border-left:1px solid #b2b2b2;display:flex;flex-direction:column;align-items:center}.tab{width:100%;height:73px;background:#b2b2b2;display:flex;flex-direction:column;align-items:center;padding-top:3px;gap:6px}.tab span{writing-mode:vertical-rl;text-orientation:sideways;font-size:13px;line-height:16px}.s>x-icon{margin-top:4px}</style>
<div class="l"></div><div class="w"><header><h2>${at(e,'heading')}</h2><x-icon name="ff" dim></x-icon><x-icon name="xx" dim></x-icon></header><div class="b"><div class="x"><slot></slot></div><div class="s"><button class="tab"><x-icon name="${at(e,'icon')}"></x-icon><span>${at(e,'heading')}</span></button><x-icon name="add" dim></x-icon></div></div></div>`);

def('view-docker', `<style>:host{flex:1;display:flex;flex-direction:column;min-height:0}.t{height:42px;background:#f3f3f3;display:flex;align-items:center;gap:5px;padding:0 1px 4px 1px}.t tool-btn:last-child{margin-left:auto}.m{flex:1;background:#fff}.f{height:30px;background:#f3f3f3;display:flex;justify-content:space-between;padding:5px 1px}</style>
<div class="t"><tool-btn icon="mag" label="缩放"></tool-btn><tool-sep></tool-sep><tool-btn icon="magp" label="放大"></tool-btn><tool-btn icon="magm" label="缩小"></tool-btn><tool-btn icon="magd" dim label="缩放选定"></tool-btn><tool-btn icon="magr" dim label="缩放对象"></tool-btn><tool-btn icon="gear" dim fly label="选项"></tool-btn></div><div class="m"></div><div class="f"><tool-btn icon="add" label="添加视图"></tool-btn><tool-btn icon="trash" dim label="删除"></tool-btn></div>`);

def('panel-section', e => `<style>:host{display:block}h3{margin:0;height:22px;display:flex;align-items:center;font:bold 14px/18px "Open Sans","Noto Sans CJK SC",sans-serif;padding:0 6px 0 5px}h3 span{flex:1;padding:0 0 2px 5px}h3 x-icon{margin-right:8px}h3 x-icon:first-child{color:#777;margin:0}
.c{padding:6px 6px 0 3px;display:flex;flex-direction:column;gap:5px}footer{height:18px;background:#e9e9e9;display:flex;justify-content:center;align-items:center;margin-top:var(--m,15px)}hr{border:0;margin:6px 0 0;height:2px;background:#e9e9e9}footer x-icon{color:#777}</style>
<h3><x-icon name="triu"></x-icon><span>${at(e,'heading')}</span>${e.hasAttribute('gear')?'<x-icon name="gearsm"></x-icon>':''}<style-box></style-box></h3><div class="c"><slot></slot></div>${e.hasAttribute('more')?'<footer><x-icon name="tri"></x-icon></footer><hr>':''}`);

const X='<style-box></style-box>', f=(ic,inner,c='')=>`<span class="f ${c}"><x-icon name="${ic}"></x-icon>${inner}</span>`;
def('text-docker', `<style>:host{flex:1;display:flex;flex-direction:column;min-height:0}.t{height:28px;background:#e9e9e9;display:flex;align-items:center;gap:2px;padding:0 1px 3px 1px;flex:none}.t .g{flex:1}
.m{flex:1;display:flex;min-height:0;background:#f3f3f3}.k{flex:1;min-width:0}.v{width:17px;border-left:1px solid #fff;background:#efefef;display:flex;flex-direction:column;justify-content:space-between}.r{display:flex;align-items:center;gap:7px;height:24px}.g8{margin-top:8px}.o{padding-left:1px}
.f{display:flex;align-items:center;gap:4px}.r .cp{margin-left:-2px}.e{margin-left:auto;width:20px;display:flex;position:relative}.fl:after{content:"";position:absolute;right:0;bottom:-3px;border:solid transparent;border-width:0 0 4px 4px;border-bottom-color:#777}.last{margin-left:auto}.al{gap:5px}.k2{gap:11px;margin-left:19px}</style>
<div class="t"><tool-btn icon="bigA" on label="字符"></tool-btn><tool-btn icon="lines" label="段落"></tool-btn><tool-btn icon="frame" label="图文框"></tool-btn><span class="g"></span><tool-btn icon="dock" label="导入样式"></tool-btn><tool-sep></tool-sep><tool-btn icon="eyepage" on label="预览"></tool-btn></div>
<div class="m"><div class="k"><panel-section heading="字符" gear more>
<div class="r o"><combo-box style="--w:164px" label="字体" value="Arial"></combo-box>${X}<spin-box style="--w:65px" label="字号" value="12.0 pt"></spin-box>${X}</div>
<div class="r o"><drop-select style="--w:164px" label="字体样式" value="常规"></drop-select>${X}<span class="e fl"><x-icon name="AA" dim></x-icon></span>${X}</div>
<div class="r g8">${f('AV','<spin-box dim style="--w:145px" label="字距" value=""></spin-box>')}${X}<span class="e fl"><x-icon name="U"></x-icon></span>${X}</div>
<div class="r">${f('Afill','<drop-select style="--w:145px" label="填充类型" value="均匀填充"></drop-select>')}<color-pick class="cp" style="--w:52px" label="文本颜色" color="#251b15"></color-pick><span class="e"><x-icon name="dots"></x-icon></span>${X}</div>
<div class="r">${f('ab','<drop-select style="--w:145px" label="背景填充" value="无填充"></drop-select>')}<color-pick class="cp" style="--w:52px" label="背景颜色" color="#000"></color-pick><span class="e"><x-icon name="dots"></x-icon></span>${X}</div>
<div class="r">${f('Aout','<combo-box han style="--w:145px" label="轮廓宽度" value="无"></combo-box>')}<color-pick class="cp" style="--w:52px" label="轮廓颜色"></color-pick><span class="e"><x-icon name="dots"></x-icon></span>${X}</div></panel-section>
<panel-section heading="段落" gear more style="--m:7px"><div class="r o al"><tool-btn icon="alNone" on label="无水平对齐"></tool-btn><tool-btn icon="alL" label="左对齐"></tool-btn><tool-btn icon="alC" label="居中"></tool-btn><tool-btn icon="alR" label="右对齐"></tool-btn><tool-btn icon="lines" label="两端对齐"></tool-btn><tool-btn icon="alF" label="强制两端对齐"></tool-btn><style-box class="last"></style-box></div>
<div class="r g8">${f('lsp','<spin-box style="--w:96px" label="行间距" value="100.0 %"></spin-box>')}${X}<drop-select style="--w:114px" label="行距单位" value="%字符高度"></drop-select>${X}</div>
<div class="r g8">${f('indL','<spin-box style="--w:96px" label="左行缩进" value="0.0 mm"></spin-box>')}${X}${f('spB','<spin-box style="--w:94px" label="段前间距" value="100.0 %"></spin-box>')}${X}</div>
<div class="r">${f('indF','<spin-box style="--w:96px" label="首行缩进" value="0.0 mm"></spin-box>')}${X}${f('spA','<spin-box style="--w:94px" label="段后间距" value="0.0 %"></spin-box>')}${X}</div>
<div class="r">${f('indR','<spin-box style="--w:96px" label="右行缩进" value="0.0 mm"></spin-box>')}${X}</div></panel-section>
<panel-section heading="图文框"><div class="r">${f('frA','<color-pick style="--w:53px" label="图文框填充"></color-pick>')}${X}<span class="f k2"><x-icon name="baseA"></x-icon>${X}</span><span class="f k2 fr"><x-icon name="frTxt"></x-icon>${X}</span></div>
<div class="r">${f('cols','<spin-box style="--w:53px" label="栏数" value="1"></spin-box>')}${X}<span class="f k2"><x-icon name="cols2" dim></x-icon>${X}</span><span class="e"><x-icon name="dots"></x-icon></span>${X}</div></panel-section></div>
<div class="v"><x-icon name="up" dim></x-icon><x-icon name="down" dim></x-icon></div></div>`);

const COLORS='251b15 3e3837 595757 727171 898989 9fa0a0 b5b5b6 c9caca dcdddd efefef ffffff 1d2088 00a0e9 009944 fff100 e60012 e4007f b04080 ef8200 f5b0b2 88736a d0cce6 a59bcd 7390c8 7968ae 8f83ad 4f6390 564f6f 7085a0 008fdc a0d8f6 b8ccd9 95a6af 6f7d86 49525a 54736f 45897a 739a98 57a796 5ba772 5bc1ce 4fa8b3 b9ccba d5ead6 a3d4ab'.split(' ');
def('color-palette', `<style>:host{flex:none;width:21px;border-left:1px solid #d7d7d7;display:flex;flex-direction:column;padding:0 1px}.h{height:6px;margin:3px 1px 0;background:radial-gradient(#aaa 1px,transparent 1px) 0 0/4px 4px}x-icon{margin:0 1px;height:18px}.a{color:#777}.w{flex:1;min-height:0;overflow:hidden;border:1px solid #555;border-bottom:0;margin-top:1px}button{display:block;width:16px;height:17px;border-bottom:1px solid #555}.w x-icon{height:16px;width:16px;margin:0}.f{height:41px}</style>
<div class="h"></div><x-icon name="trir" class="a"></x-icon><x-icon name="dropperg" dim></x-icon><x-icon name="up" dim></x-icon><div class="w"><button aria-label="无" style="background:#fff"><x-icon name="none"></x-icon></button>${COLORS.map(c=>`<button aria-label="#${c}" style="background:#${c}"></button>`).join('')}</div><div class="f"><x-icon name="down" dim></x-icon><x-icon name="dbl" dim></x-icon></div>`);

def('status-bar', `<style>:host{flex:none;height:23px;border-top:1px solid #d7d7d7;overflow:hidden}.r{display:flex;padding:10px 10px 0 11px;align-items:flex-start}.m{flex:1;padding-left:9px;white-space:nowrap}.g,.k{display:flex;flex:none;gap:4px;margin-top:-2px}.g{width:203px}.k{width:256px}.t{line-height:22px;white-space:pre}.sw{flex:none;width:21px;height:21px;border:1px solid #999;background:#fff;margin-left:-3px}.g x-icon,.k x-icon{margin-top:2px}.k .sw{background:#251b15;margin-left:-5px}.k .t{margin-left:-1px}</style>
<div class="r"><x-icon name="gear"></x-icon><span class="m">${lab('单击并拖动可创建常用形状对象；按住 Ctrl 键拖动可锁定比例；按住 Shift 键拖动可从中心开始绘制')}</span>
<span class="g"><x-icon name="bucket"></x-icon><svg class="sw" viewBox="0 0 19 19"><path d="M0 19 19 0" stroke="#d00" stroke-width="2"/></svg><span class="t">${lab('无')}</span></span>
<span class="k"><x-icon name="pen"></x-icon><span class="sw"></span><span class="t">C:   0 M:    0 Y:    0 K:    100</span></span><x-icon name="profile"></x-icon></div>`);

/* ---- overlays ---- */
def('ime-badge', `<style>:host{position:absolute;left:1273px;top:959px;width:61px;height:26px;border:1px solid #999;border-radius:5px;background:#fff;box-shadow:1px 1px 3px #888;display:flex;align-items:center;justify-content:center;gap:3px;z-index:6;color:#333;font-size:13px}svg{display:block}</style><span>CH</span><svg width="11" height="12" fill="none" stroke="#333"><path d="M5 1q5 1 5 5T2 11Q7 7 5 1z"/></svg><span>简</span>`);
def('site-mark', `<style>:host{position:absolute;right:11px;bottom:7px;display:flex;align-items:center;gap:1px;z-index:6;opacity:.8}p{margin:0;font:500 21px/26px "Noto Sans CJK SC",sans-serif;color:#4a8fdb;white-space:nowrap}p+p{font:bold 16px/18px "Liberation Sans",sans-serif;color:#3db54f}</style>
<svg width="42" height="52" viewBox="0 0 42 52"><path d="M42 7Q14 7 4 23-3 37 8 43 5 30 16 20 26 11 42 7z" fill="#4a9ae8"/><path d="M18 21Q36 16 39 26 40 42 7 47 28 39 27 30 23 25 15 31 14 25 18 21z" fill="#50bf60"/><path d="M24 35Q22 42 7 47 17 41 15 34z" fill="#d8e04a"/></svg><div><p>极光下载站</p><p>www.xz7.com</p></div>`);
def('mouse-pointer', `<style>:host{position:absolute;left:88px;top:55px;z-index:7}</style><svg width="13" height="20"><path d="M.5.500V16l3.500-3.500L6.500 18.500l2.500-1L6.500 11.500h5z" fill="#fff" stroke="#222"/></svg>`);

def('corel-app', `<style>:host{display:flex;flex-direction:column;height:100vh;position:relative;overflow:hidden}main{flex:1;display:flex;min-height:0}</style>
<title-bar></title-bar><menu-bar></menu-bar><std-toolbar></std-toolbar><prop-bar></prop-bar>
<main><work-area></work-area><docker-panel heading="视图" icon="mag"><view-docker></view-docker></docker-panel><docker-panel heading="文本" icon="textset"><text-docker></text-docker></docker-panel><color-palette></color-palette></main>
<status-bar></status-bar><file-menu></file-menu><ime-badge></ime-badge><site-mark></site-mark><mouse-pointer></mouse-pointer>`);
</script>
</body>
</html>
